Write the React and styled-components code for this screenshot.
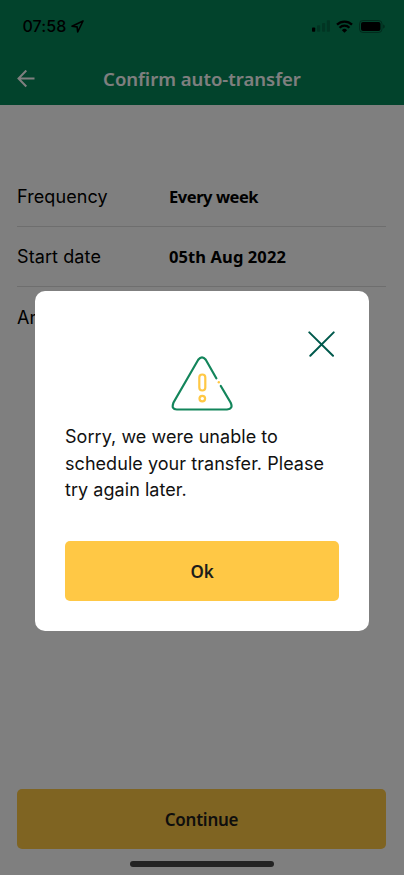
import React from "react";
import styled, { createGlobalStyle } from "styled-components";

const GlobalStyle = createGlobalStyle`
  * {
    box-sizing: border-box;
  }

  body {
    margin: 0;
    background-color: #fff;
    font-family: Inter, "Liberation Sans", sans-serif;
    color: #000;
  }
`;

const Screen = styled.div`
  position: relative;
  width: 100%;
  height: 875px;
  display: flex;
  flex-direction: column;
  overflow: hidden;
  background-color: #fff;
`;

const Header = styled.header`
  height: 105px;
  background-color: #048658;
`;

const StatusBar = styled.div`
  height: 52px;
  padding: 0 19px 0 22.5px;
  display: flex;
  align-items: center;
  justify-content: space-between;
`;

const StatusGroup = styled.div`
  display: flex;
  align-items: center;
  gap: ${(props) => props.$gap}px;
`;

const Time = styled.span`
  font-size: 16px;
  font-weight: 500;
  letter-spacing: 0.1px;
`;

const TitleBar = styled.div`
  height: 53px;
  padding: 0 17px;
  display: grid;
  grid-template-columns: 20px 1fr 20px;
  align-items: center;

  svg {
    display: block;
  }
`;

const Title = styled.h1`
  margin: 0;
  font-family: "Noto Sans", sans-serif;
  font-size: 18.5px;
  font-weight: 600;
  line-height: 26px;
  letter-spacing: 0;
  text-align: center;
  white-space: nowrap;
  color: #fff;
`;

const Details = styled.dl`
  margin: 0;
  padding: 61.6px 18px 0 17px;
  flex: 1;
`;

const Row = styled.div`
  height: 60.4px;
  display: grid;
  grid-template-columns: 152px 1fr;
  align-items: center;
  border-bottom: 1px solid #dcdcdc;

  &:last-child {
    border-bottom-color: transparent;
  }
`;

const Label = styled.dt`
  font-size: 18px;
  letter-spacing: 0.1px;
`;

const Value = styled.dd`
  margin: 0;
  font-family: "Noto Sans", sans-serif;
  font-size: 16.5px;
  font-weight: 700;
  letter-spacing: ${(props) => props.$spacing || 0}px;
`;

const Button = styled.button`
  width: 100%;
  height: 60px;
  padding: 0;
  border: none;
  border-radius: 5px;
  background-color: #ffc845;
  color: #1d1d1b;
  font-family: "Noto Sans", sans-serif;
  font-size: 17px;
  font-weight: 600;
  letter-spacing: -0.25px;
`;

const Footer = styled.footer`
  padding: 0 18px 8px 17px;
  display: flex;
  flex-direction: column;
  align-items: center;
  gap: 12px;
`;

const HomeIndicator = styled.div`
  width: 144px;
  height: 6px;
  border-radius: 3px;
  background-color: #464646;
`;

const Overlay = styled.div`
  position: absolute;
  inset: 0;
  padding: 291px 35px 0;
  background-color: rgba(0, 0, 0, 0.5);
`;

const Modal = styled.div`
  height: 340px;
  padding: 40px 30px 30px;
  display: flex;
  flex-direction: column;
  border-radius: 10px;
  background-color: #fff;
`;

const CloseButton = styled.button`
  align-self: flex-end;
  width: 28px;
  height: 28px;
  margin-right: 4px;
  padding: 0;
  border: none;
  background: none;

  svg {
    display: block;
  }
`;

const WarningIcon = styled.svg`
  align-self: center;
  margin: -4.5px 1px 0 0;
  flex: none;
`;

const Message = styled.p`
  margin: 13.5px 0 0;
  flex: 1;
  font-size: 18px;
  line-height: 26.5px;
  white-space: nowrap;
  letter-spacing: 0.05px;
  color: #111;
`;

function StatusIcons() {
  return (
    <StatusGroup $gap={6}>
      <svg width="18" height="12" viewBox="0 0 18 12">
        <rect x="0" y="7.5" width="3.2" height="4.3" rx="0.8" />
        <g opacity="0.2">
          <rect x="5" y="5.3" width="3.2" height="6.5" rx="0.8" />
          <rect x="10" y="3" width="3.2" height="8.8" rx="0.8" />
          <rect x="14.8" y="0.3" width="3.2" height="11.5" rx="0.8" />
        </g>
      </svg>
      <svg width="17" height="13" viewBox="0 0 17 13" fill="none" stroke="#000" strokeWidth="2.3">
        <path d="M1 4.6a10.8 10.8 0 0 1 15 0" />
        <path d="M3.6 7.8a6.8 6.8 0 0 1 9.8 0" />
        <path d="M8.5 12.8 5.9 10.2a3.6 3.6 0 0 1 5.2 0z" fill="#000" stroke="none" />
      </svg>
      <svg width="26" height="13" viewBox="0 0 26 13">
        <rect x="0.5" y="0.5" width="22.5" height="12" rx="3.4" fill="none" stroke="#000" strokeOpacity="0.35" />
        <rect x="2" y="2" width="19.5" height="9" rx="2" />
        <path d="M24.2 4.5v4c1-.3 1.5-1.1 1.5-2s-.5-1.7-1.5-2z" opacity="0.4" />
      </svg>
    </StatusGroup>
  );
}

function App() {
  return (
    <>
      <GlobalStyle />
      <Screen>
        <Header>
          <StatusBar>
            <StatusGroup $gap={5}>
              <Time>07:58</Time>
              <svg width="13" height="13" viewBox="0 0 13 13" fill="none" stroke="#000" strokeWidth="1.6" strokeLinejoin="round">
                <path d="M12 1 1 6.2l5.1.7.6 5.1z" />
              </svg>
            </StatusGroup>
            <StatusIcons />
          </StatusBar>
          <TitleBar>
            <svg width="18" height="18" viewBox="0 0 18 18" fill="none" stroke="#fff" strokeWidth="2">
              <path d="M17.5 8.5H1.8M9.3.5 1.5 8.5l7.8 8" />
            </svg>
            <Title>Confirm auto-transfer</Title>
          </TitleBar>
        </Header>

        <Details>
          <Row>
            <Label>Frequency</Label>
            <Value $spacing={-0.45}>Every week</Value>
          </Row>
          <Row>
            <Label>Start date</Label>
            <Value $spacing={0.1}>05th Aug 2022</Value>
          </Row>
          <Row>
            <Label>Amount</Label>
          </Row>
        </Details>

        <Footer>
          <Button>Continue</Button>
          <HomeIndicator />
        </Footer>

        <Overlay>
          <Modal role="dialog">
            <CloseButton aria-label="Close">
              <svg width="28" height="28" viewBox="0 0 28 28" fill="none" stroke="#00594c" strokeWidth="2" strokeLinecap="round">
                <path d="M2.3 1.4 26 24.8M26.7 1.4 3.3 24.8" />
              </svg>
            </CloseButton>
            <WarningIcon width="62" height="56" viewBox="0 0 62 56" fill="none" strokeLinecap="round">
              <path
                d="M45.3 23.3 34.8 4.8Q31 0 27.2 4.8L2.4 47.8Q0 54.5 5.8 54.5H56Q62.5 53.7 59.7 47.8L49.8 31"
                stroke="#13855b"
                strokeWidth="2.2"
              />
              <rect x="28.3" y="19.5" width="6" height="16" rx="3" stroke="#ffc845" strokeWidth="2.2" />
              <circle cx="31.3" cy="43.6" r="2.8" stroke="#ffc845" strokeWidth="2.2" />
              <circle cx="47.8" cy="27.3" r="1.2" fill="#ffc845" />
            </WarningIcon>
            <Message>
              Sorry, we were unable to
              <br />
              schedule your transfer. Please
              <br />
              try again later.
            </Message>
            <Button>Ok</Button>
          </Modal>
        </Overlay>
      </Screen>
    </>
  );
}

export default App;
